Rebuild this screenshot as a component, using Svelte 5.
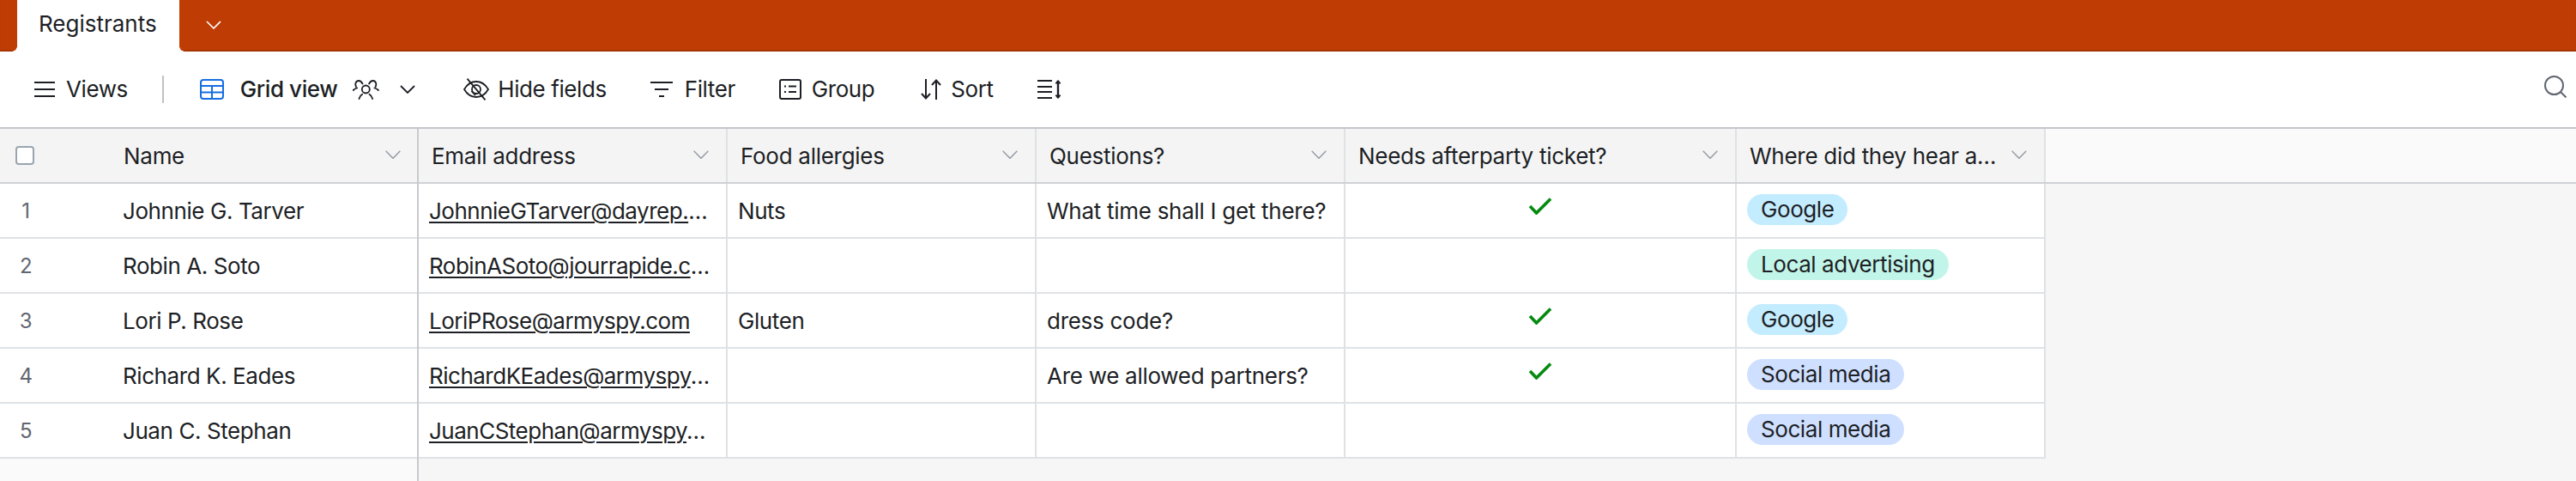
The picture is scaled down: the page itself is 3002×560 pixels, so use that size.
<script>
  const columns = [
    { label: 'Email address', width: 360 },
    { label: 'Food allergies', width: 360 },
    { label: 'Questions?', width: 360 },
    { label: 'Needs afterparty ticket?', width: 456 },
    { label: 'Where did they hear about us?', width: 360 }
  ];
  const rows = [
    { name: 'Johnnie G. Tarver', email: 'JohnnieGTarver@dayrep.com', food: 'Nuts', q: 'What time shall I get there?', ticket: true, src: 'Google', tone: 'cyan' },
    { name: 'Robin A. Soto', email: 'RobinASoto@jourrapide.com', food: '', q: '', ticket: false, src: 'Local advertising', tone: 'teal' },
    { name: 'Lori P. Rose', email: 'LoriPRose@armyspy.com', food: 'Gluten', q: 'dress code?', ticket: true, src: 'Google', tone: 'cyan' },
    { name: 'Richard K. Eades', email: 'RichardKEades@armyspy.com', food: '', q: 'Are we allowed partners?', ticket: true, src: 'Social media', tone: 'blue' },
    { name: 'Juan C. Stephan', email: 'JuanCStephan@armyspy.com', food: '', q: '', ticket: false, src: 'Social media', tone: 'blue' }
  ];
</script>

<div class="page">
  <header class="tabbar">
    <div class="tab">Registrants</div>
    <svg class="tabchev" viewBox="0 0 18 10" width="18" height="10"><path d="M1 1l8 8 8-8" fill="none" stroke="#fff" stroke-width="1.6"/></svg>
  </header>

  <nav class="toolbar">
    <svg class="i-menu" viewBox="0 0 24 18" width="24" height="18"><path d="M0 1h24M0 9h24M0 17h24" stroke="#1d1f25" stroke-width="2" fill="none"/></svg>
    <span class="t-views">Views</span>
    <span class="divider"></span>
    <svg class="i-grid" viewBox="0 0 28 24" width="28" height="24"><rect x="1" y="1" width="26" height="22" rx="3" fill="none" stroke="#166ee1" stroke-width="2"/><path d="M1 8h26M1 15.500h26M14 8v15" stroke="#166ee1" stroke-width="2" fill="none"/></svg>
    <span class="t-grid">Grid view</span>
    <svg class="i-people" viewBox="0 0 31 24" width="31" height="24" fill="none" stroke="#1d1f25" stroke-width="1.800" stroke-linecap="round"><circle cx="15.300" cy="12" r="4.500"/><path d="M7.500 23c.5-2.200 1.700-4 3.600-5.200M23.100 23c-.5-2.200-1.700-4-3.600-5.200"/><path d="M4 9C2.500 6 3.500 2 7 2c2 0 3.500 1.500 4.500 3.500M.7 13c1-1 2.500-2 4.500-2.500"/><path d="M26.600 9c1.500-3 .5-7-3-7-2 0-3.500 1.500-4.500 3.500M29.900 13c-1-1-2.500-2-4.500-2.500"/></svg>
    <svg class="i-chev" viewBox="0 0 18 10" width="18" height="10"><path d="M1 1l8 8 8-8" fill="none" stroke="#1d1f25" stroke-width="1.800"/></svg>
    <svg class="i-eye" viewBox="0 0 30 26" width="30" height="26" fill="none" stroke="#1d1f25" stroke-width="1.800"><path d="M1 13C4.500 7 9 4 15 4s10.500 3 14 9c-3.500 6-8 9-14 9S4.500 19 1 13z"/><circle cx="15" cy="13" r="5"/><path d="M4.500.7l21 24.600M9.500 15l4.500 5"/></svg>
    <span class="t-hide">Hide fields</span>
    <svg class="i-filter" viewBox="0 0 26 18" width="26" height="18"><path d="M0 1h26M5 9h16M10 17h6" stroke="#1d1f25" stroke-width="2" fill="none"/></svg>
    <span class="t-filter">Filter</span>
    <svg class="i-group" viewBox="0 0 26 24" width="26" height="24" fill="none" stroke="#1d1f25" stroke-width="2"><rect x="1" y="1" width="24" height="22" rx="2"/><path d="M6 8.500h2M11 8.500h9M6 15h2M11 15h9"/></svg>
    <span class="t-group">Group</span>
    <svg class="i-sort" viewBox="0 0 24 24" width="24" height="24" fill="none" stroke="#1d1f25" stroke-width="2"><path d="M6 0v22M1 17l5 5.500 5-5.500M18 24V2M13 7l5-5.500 5 5.500"/></svg>
    <span class="t-sort">Sort</span>
    <svg class="i-height" viewBox="0 0 29 22" width="29" height="22"><path d="M0 1h17M0 8h17M0 14h17M0 21h17" stroke="#1d1f25" stroke-width="2" fill="none"/><path d="M24 1v20" stroke="#1d1f25" stroke-width="2.400"/><path d="M21 4l3-3.500 3 3.500zM21 18l3 3.500 3-3.500z" fill="#1d1f25" stroke="#1d1f25"/></svg>
    <svg class="i-search" viewBox="0 0 26 26" width="26" height="26" fill="none" stroke="#616670" stroke-width="2"><circle cx="11.500" cy="11.500" r="10.500"/><path d="M19 19l6.500 6.500"/></svg>
  </nav>

  <main class="grid">
    <section class="left">
      <div class="row head">
        <div class="check"><span class="box"></span></div>
        <div class="namehead">Name</div>
        <svg class="chev" viewBox="0 0 18 10" width="18" height="10"><path d="M.7.7l8.300 8.600L17.300.7" fill="none" stroke="#979ca6" stroke-width="1.500"/></svg>
      </div>
      {#each rows as r, i}
        <div class="row body">
          <div class="num">{i + 1}</div>
          <div class="name">{r.name}</div>
        </div>
      {/each}
    </section>

    <section class="right">
      <div class="row head">
        {#each columns as c}
          <div class="cell hcell" style="width:{c.width}px">
            <span class="label">{c.label}</span>
            <svg class="chev" viewBox="0 0 18 10" width="18" height="10"><path d="M.7.7l8.300 8.600L17.300.7" fill="none" stroke="#979ca6" stroke-width="1.500"/></svg>
          </div>
        {/each}
        <div class="filler"></div>
      </div>
      {#each rows as r}
        <div class="row body datarow">
          <div class="cell c360"><div class="clip"><a href="#top" class="mail">{r.email}</a></div></div>
          <div class="cell c360"><div class="clip">{r.food}</div></div>
          <div class="cell c360"><div class="clip question">{r.q}</div></div>
          <div class="cell c456 center">
            {#if r.ticket}
              <svg class="tick" viewBox="0 0 28 20" width="28" height="20"><path d="M2 10l7.500 8L26 1.500" fill="none" stroke="#048a0e" stroke-width="3.600"/></svg>
            {/if}
          </div>
          <div class="cell c360"><span class="pill {r.tone}">{r.src}</span></div>
        </div>
      {/each}
    </section>
  </main>
</div>

<style>
  :global(body) { margin: 0; }
  .page {
    width: 3002px;
    height: 560px;
    overflow: hidden;
    display: flex;
    flex-direction: column;
    font-family: Inter, "Liberation Sans", sans-serif;
    font-size: 26px;
    letter-spacing: -0.42px;
    color: #1d1f25;
    background: #fff;
  }
  .tabbar {
    height: 60px;
    flex: none;
    display: flex;
    align-items: center;
    background: #bf3d05;
    box-shadow: inset 0 -2px 1px rgba(0, 0, 0, 0.14);
  }
  .tab {
    position: relative;
    width: 189px;
    height: 60px;
    margin-left: 20px;
    box-sizing: border-box;
    padding: 12px 0 0 25px;
    line-height: 32px;
    letter-spacing: 0;
    background: #fff;
  }
  .tab::before, .tab::after {
    content: "";
    position: absolute;
    bottom: 0;
    width: 6px;
    height: 6px;
  }
  .tab::before { left: -6px; background: radial-gradient(circle at 0 0, #bf3d05 5.500px, #fff 6px); }
  .tab::after { right: -6px; background: radial-gradient(circle at 100% 0, #bf3d05 5.500px, #fff 6px); }
  .tabchev { margin: -2px 0 0 31px; }

  .toolbar {
    height: 88px;
    flex: none;
    display: flex;
    align-items: center;
    padding: 0 11px 0 40px;
    box-sizing: border-box;
    line-height: 32px;
  }
  .toolbar > span { white-space: nowrap; }
  .toolbar svg { flex: none; }
  .t-views { margin-left: 13px; }
  .divider { width: 2px; height: 32px; background: #bfc1c5; margin-left: 40px; }
  .i-grid { margin-left: 42px; }
  .t-grid { margin-left: 19px; font-weight: 500; }
  .i-people { margin-left: 18px; }
  .i-chev { margin-left: 24px; }
  .i-eye { margin-left: 56px; }
  .t-hide { margin-left: 10px; }
  .i-filter { margin-left: 51px; }
  .t-filter { margin-left: 14px; }
  .i-group { margin-left: 51px; }
  .t-group { margin-left: 12px; }
  .i-sort { margin-left: 54px; }
  .t-sort { margin-left: 11px; }
  .i-height { margin-left: 51px; }
  .i-search { margin-left: auto; position: relative; top: -3px; }

  .grid {
    flex: 1;
    display: flex;
    min-height: 0;
    border-top: 2px solid #c4c6ca;
    background: #f6f6f6;
  }
  .left {
    width: 488px;
    flex: none;
    box-sizing: border-box;
    border-right: 2px solid #c8cacd;
    background: #fafafa;
  }
  .right { flex: 1; min-width: 0; }
  .row {
    height: 64px;
    box-sizing: border-box;
    display: flex;
    align-items: center;
    line-height: 32px;
    padding-top: 2px;
    border-bottom: 2px solid #dfe2e5;
  }
  .head { background: #f4f4f4; border-bottom-color: #d0d1d4; padding-top: 0; letter-spacing: -0.28px; }
  .body { background: #fff; }
  .right .head { background: #fafafa; }
  .datarow { width: 1896px; padding-top: 0; }

  .check { width: 143px; flex: none; display: flex; padding-left: 18px; box-sizing: border-box; }
  .box {
    width: 22px;
    height: 22px;
    box-sizing: border-box;
    border: 2px solid #9aa5af;
    border-radius: 4px;
    background: #fff;
  }
  .namehead { width: 306px; flex: none; padding: 1px 0 0 1px; box-sizing: border-box; }
  .chev { flex: none; margin-top: -3px; }
  .num {
    width: 60px;
    margin-right: 83px;
    flex: none;
    text-align: center;
    font-size: 24px;
    color: #616670;
  }
  .name { white-space: nowrap; }

  .cell {
    height: 100%;
    flex: none;
    box-sizing: border-box;
    display: flex;
    align-items: center;
    border-right: 2px solid #dfe1e3;
  }
  .c360 { width: 360px; padding: 2px 18px 0 12px; }
  .c456 { width: 456px; }
  .center { justify-content: center; }
  .hcell { padding: 1px 20px 0 15px; background: #f4f4f4; justify-content: space-between; gap: 10px; }
  .label { flex: 1; min-width: 0; white-space: nowrap; overflow: hidden; text-overflow: ellipsis; }
  .filler { flex: 1; height: 100%; }
  .clip { flex: 1; min-width: 0; white-space: nowrap; overflow: hidden; text-overflow: ellipsis; }
  .question { letter-spacing: -0.28px; }
  .mail { color: inherit; letter-spacing: -0.5px; text-decoration: underline; text-decoration-thickness: 2px; text-underline-offset: 3px; }
  .tick { margin: -10px 0 0 0; }
  .pill {
    height: 36px;
    line-height: 36px;
    padding: 0 16px;
    border-radius: 18px;
    white-space: nowrap;
    margin-top: -4px;
  }
  .cyan { background: #c4ecff; }
  .teal { background: #c2f5e9; }
  .blue { background: #cfdfff; }
</style>
